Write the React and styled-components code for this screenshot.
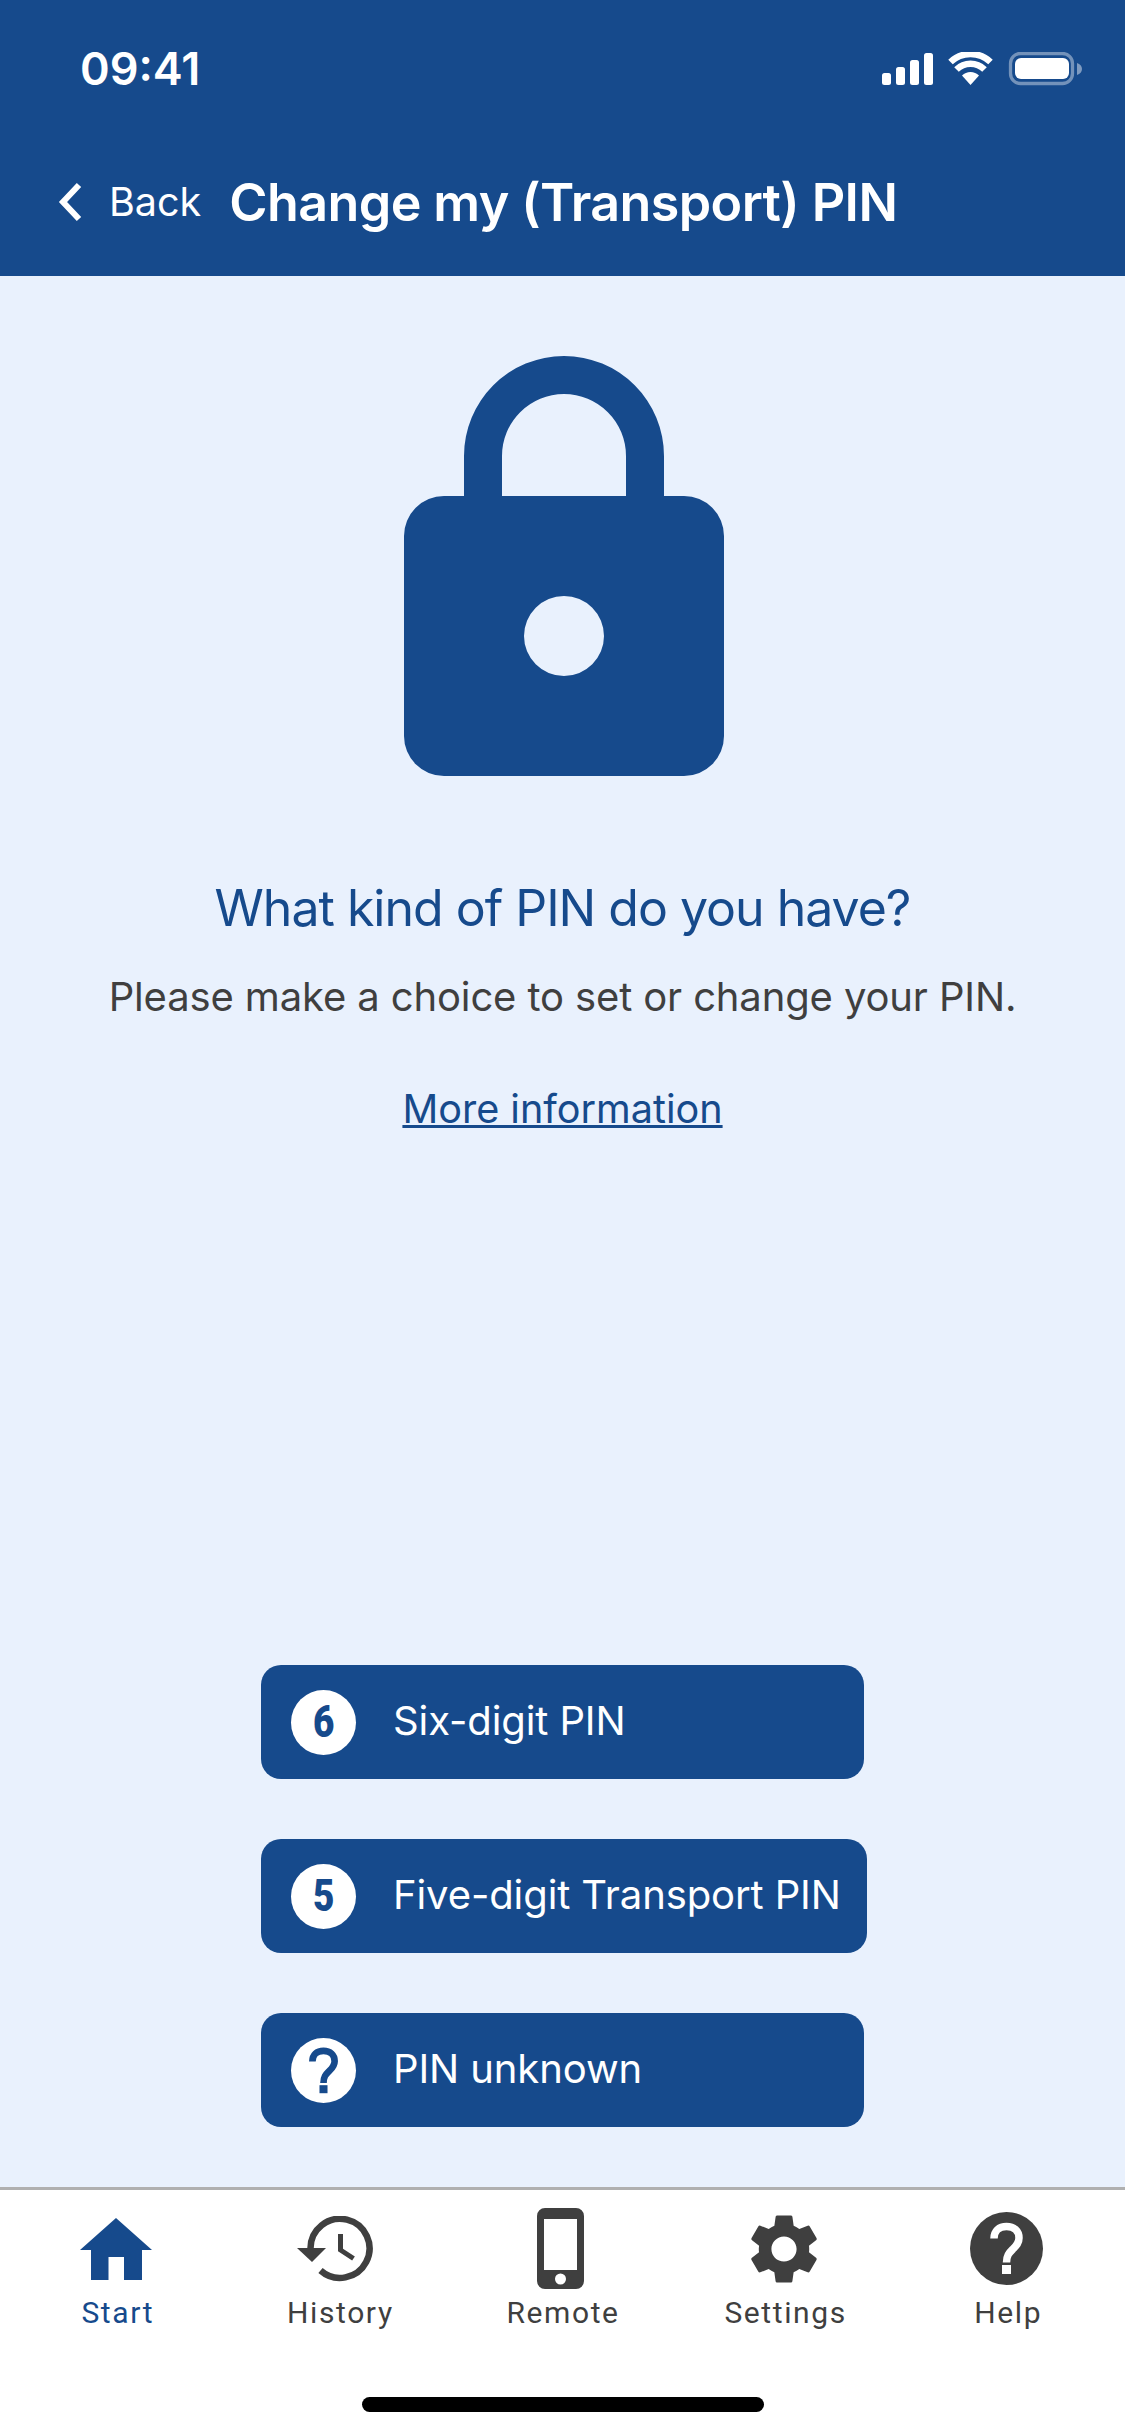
import React from "react";
import styled, { createGlobalStyle } from "styled-components";
import { MdSettings } from "react-icons/md";

const BLUE = "#164a8c";
const GREY = "#3f3f3f";

const Global = createGlobalStyle`
  html, body { margin: 0; padding: 0; background: #fff; }
  * { box-sizing: border-box; }
`;

const Page = styled.div`
  width: 1125px;
  height: 2436px;
  display: flex;
  flex-direction: column;
  background: #e9f1fd;
  font-family: Inter, "Liberation Sans", sans-serif;
  overflow: hidden;
`;

const Header = styled.header`
  height: 276px;
  flex: none;
  background: ${BLUE};
  color: #fff;
  display: flex;
  flex-direction: column;
`;

const StatusBar = styled.div`
  height: 168px;
  display: flex;
  justify-content: space-between;
  align-items: flex-start;
  padding: 42px 43px 0 80px;
`;

const Time = styled.span`
  font-size: 45px;
  line-height: 54px;
  font-weight: 600;
`;

const StatusIcons = styled.svg`
  display: block;
  margin-top: 10px;
`;

const NavBar = styled.nav`
  display: flex;
  align-items: center;
  height: 68px;
  padding-left: 57px;
`;

const BackLink = styled.a`
  display: flex;
  align-items: center;
  gap: 24px;
  font-size: 39.5px;
  line-height: 50px;
  margin-right: 28px;
`;

const Title = styled.h1`
  margin: 2px 0 0;
  font-size: 52px;
  line-height: 60px;
  font-weight: 600;
  letter-spacing: -0.6px;
  white-space: nowrap;
`;

const Main = styled.main`
  flex: 1;
  display: flex;
  flex-direction: column;
  align-items: center;
  padding: 80px 0 60px;
`;

const LockIcon = styled.svg`
  display: block;
  flex: none;
`;

const Heading = styled.h2`
  margin: 98px 0 0;
  font-size: 50px;
  line-height: 68px;
  font-weight: 400;
  letter-spacing: -1px;
  color: ${BLUE};
`;

const Subtitle = styled.p`
  margin: 30px 0 0;
  font-size: 40px;
  line-height: 50px;
  letter-spacing: -0.13px;
  color: ${GREY};
`;

const InfoLink = styled.a`
  margin-top: 62px;
  font-size: 39.6px;
  line-height: 50px;
  color: ${BLUE};
  text-decoration: underline;
`;

const ButtonGroup = styled.div`
  margin-top: auto;
  align-self: flex-start;
  margin-left: 261px;
  display: flex;
  flex-direction: column;
  align-items: flex-start;
  gap: 60px;
`;

const ActionButton = styled.button`
  width: ${(p) => (p.$wide ? 606 : 603)}px;
  height: 114px;
  border: 0;
  border-radius: 20px;
  background: ${BLUE};
  color: #fff;
  display: flex;
  align-items: center;
  gap: 37px;
  padding: 0 0 0 30px;
  font-family: inherit;
  font-size: 40px;
  letter-spacing: -0.1px;
  white-space: nowrap;
`;

const ButtonText = styled.span`
  line-height: 50px;
  margin-top: -3px;
`;

const Badge = styled.span`
  width: 65px;
  height: 65px;
  flex: none;
  border-radius: 50%;
  background: #fff;
  color: ${BLUE};
  display: flex;
  align-items: center;
  justify-content: center;
`;

const Digit = styled.span`
  display: inline-block;
  font-family: Roboto, "Liberation Sans", sans-serif;
  font-weight: 900;
  font-size: 44px;
  line-height: 1;
  transform: scaleX(0.84);
`;

const TabBar = styled.footer`
  position: relative;
  height: 249px;
  flex: none;
  background: #fff;
  border-top: 3px solid #b0b0b0;
  display: grid;
  grid-template-columns: repeat(5, 1fr);
  padding: 0 6px;
`;

const Tab = styled.a`
  display: flex;
  flex-direction: column;
  align-items: center;
  color: ${(p) => (p.$active ? BLUE : GREY)};
`;

const TabIcon = styled.div`
  height: 102px;
  padding: 15px 3px 0 0;
  display: flex;
  align-items: center;
  justify-content: center;
  svg { display: block; }
`;

const TabLabel = styled.span`
  margin: 3px 0 0 1px;
  font-family: Roboto, "Liberation Sans", sans-serif;
  font-size: 30px;
  line-height: 36px;
  letter-spacing: 1.6px;
`;

const HomeIndicator = styled.div`
  position: absolute;
  left: 362px;
  bottom: 24px;
  width: 402px;
  height: 15px;
  border-radius: 8px;
  background: #000;
`;

const Question = ({ size, color }) => (
  <svg width={size} height={size} viewBox="0 0 73 73" aria-hidden="true">
    <path
      d="M24 26.500c0-7.500 5-12 12.500-12s12.500 4.500 12.500 11.500c0 5.500-3 8-6.500 11.500-3.500 3.500-6 6-6 13"
      fill="none"
      stroke={color}
      strokeWidth="7.500"
    />
    <rect x="32" y="53" width="9" height="9" fill={color} />
  </svg>
);

const Status = () => (
  <StatusIcons width="201" height="36" viewBox="881 52 201 36" aria-hidden="true">
    <g fill="#fff">
      <rect x="882" y="73" width="9" height="12" rx="2.500" />
      <rect x="896" y="67" width="9" height="18" rx="2.500" />
      <rect x="910" y="60" width="9" height="25" rx="2.500" />
      <rect x="924" y="53" width="9" height="32" rx="2.500" />
      <path d="M970.500 85l-8.500-9.500a12 12 0 0 1 17 0z" />
    </g>
    <g fill="none" stroke="#fff" strokeWidth="6.500">
      <path d="M956.500 69.500a20 20 0 0 1 28 0" />
      <path d="M950.500 62a29 29 0 0 1 40 0" />
    </g>
    <rect x="1010.500" y="53.500" width="62" height="30" rx="10" fill="none" stroke="#fff" strokeOpacity="0.4" strokeWidth="3.300" />
    <rect x="1015" y="58" width="54" height="21" rx="6" fill="#fff" />
    <path d="M1077 63c3 1 5 3 5 6s-2 5-5 6z" fill="#fff" fillOpacity="0.45" />
  </StatusIcons>
);

const tabs = [
  {
    label: "Start",
    active: true,
    icon: (
      <svg width="72" height="62" viewBox="0 0 72 62" fill={BLUE}>
        <path d="M36 0l36 32H62v30H44V39H28.500v23H11V32H0z" />
      </svg>
    ),
  },
  {
    label: "History",
    icon: (
      <svg width="83" height="66" viewBox="0 0 83 66" fill="none" stroke={GREY} strokeWidth="6.500">
        <path d="M13.500 32.500A29.500 29.500 0 1 1 23.500 54.500" />
        <path d="M43.500 18v16l13 8.500" strokeWidth="5" />
        <path d="M0 32h29L15 46z" fill={GREY} stroke="none" />
      </svg>
    ),
  },
  {
    label: "Remote",
    icon: (
      <svg width="47" height="81" viewBox="0 0 47 81" fill={GREY}>
        <path
          fillRule="evenodd"
          d="M8 0h31a8 8 0 0 1 8 8v65a8 8 0 0 1-8 8H8a8 8 0 0 1-8-8V8a8 8 0 0 1 8-8zM7 11v51h33V11zM23.500 65.500a5.500 5.500 0 1 0 0 11 5.500 5.500 0 0 0 0-11z"
        />
      </svg>
    ),
  },
  {
    label: "Settings",
    icon: <MdSettings size={84} color={GREY} />,
  },
  {
    label: "Help",
    icon: (
      <svg width="73" height="73" viewBox="0 0 73 73">
        <circle cx="36.500" cy="36.500" r="36.500" fill={GREY} />
        <path
          d="M24 26.500c0-7.500 5-12 12.500-12s12.500 4.500 12.500 11.500c0 5.500-3 8-6.500 11.500-3.500 3.500-6 6-6 13"
          fill="none"
          stroke="#fff"
          strokeWidth="7.500"
        />
        <rect x="32" y="53" width="9" height="9" fill="#fff" />
      </svg>
    ),
  },
];

export default function App() {
  return (
    <Page>
      <Global />
      <Header>
        <StatusBar>
          <Time>09:41</Time>
          <Status />
        </StatusBar>
        <NavBar>
          <BackLink>
            <svg width="28" height="40" viewBox="0 0 28 40" fill="none" stroke="#fff" strokeWidth="6">
              <path d="M22 3L6 20l16 17" />
            </svg>
            Back
          </BackLink>
          <Title>Change my (Transport) PIN</Title>
        </NavBar>
      </Header>
      <Main>
        <LockIcon width="323" height="420" viewBox="-3 0 323 420" aria-hidden="true">
          <path
            fill={BLUE}
            fillRule="evenodd"
            d="M60 140V100a100 100 0 0 1 200 0v40h20a40 40 0 0 1 40 40v200a40 40 0 0 1-40 40H40a40 40 0 0 1-40-40V180a40 40 0 0 1 40-40zM98 140h124V100a62 62 0 0 0-124 0zM160 240a40 40 0 1 0 0 80 40 40 0 0 0 0-80z"
          />
        </LockIcon>
        <Heading>What kind of PIN do you have?</Heading>
        <Subtitle>Please make a choice to set or change your PIN.</Subtitle>
        <InfoLink>More information</InfoLink>
        <ButtonGroup>
          <ActionButton>
            <Badge><Digit>6</Digit></Badge>
            <ButtonText>Six-digit PIN</ButtonText>
          </ActionButton>
          <ActionButton $wide>
            <Badge><Digit>5</Digit></Badge>
            <ButtonText>Five-digit Transport PIN</ButtonText>
          </ActionButton>
          <ActionButton>
            <Badge>
              <Question size={65} color={BLUE} />
            </Badge>
            <ButtonText>PIN unknown</ButtonText>
          </ActionButton>
        </ButtonGroup>
      </Main>
      <TabBar>
        {tabs.map((t) => (
          <Tab key={t.label} $active={t.active}>
            <TabIcon>{t.icon}</TabIcon>
            <TabLabel>{t.label}</TabLabel>
          </Tab>
        ))}
        <HomeIndicator />
      </TabBar>
    </Page>
  );
}
